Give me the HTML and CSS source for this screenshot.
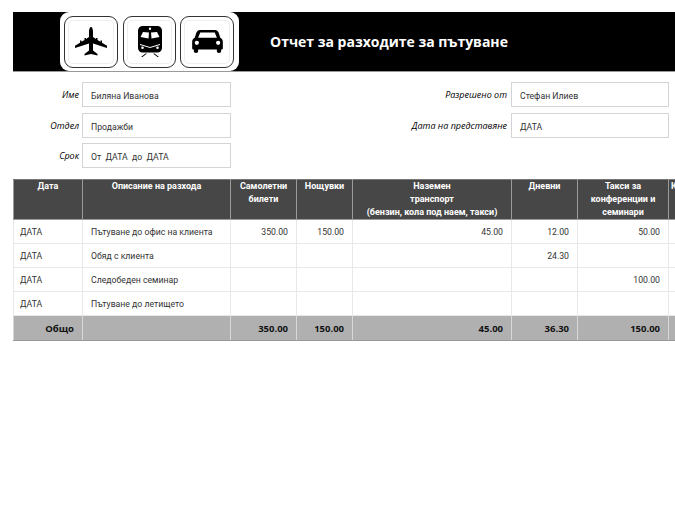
FILE: index.html
```html
<!DOCTYPE html>
<html lang="bg">
<head>
<meta charset="utf-8">
<title>Отчет за разходите за пътуване</title>
<link rel="stylesheet" href="styles.css">
</head>
<body>
<div class="page">
  <header class="banner">
    <div class="tab">
      <div class="icon"><svg viewBox="0 0 32 29" width="32" height="29"><path d="M16 0c1.200 0 2 2 2 5v5l3 2v-1h1.500v2l3 1.800V13.500H27v2.300l5 3V21l-14-4.500v7l4.500 3.500v1.500L16 27l-6.500 1.500V27l4.500-3.500v-7L0 21v-2.200l5-3v-2.300h1.500v1.300l3-1.800v-2H11v1l3-2V5c0-3 .8-5 2-5z"/></svg></div>
      <div class="icon icon-mid"><svg viewBox="0 0 24 31" width="24" height="31"><path fill-rule="evenodd" d="M5 0h14c3 0 5 2 5 4.500V22c0 2.500-2 4.500-4.500 4.500h-15C2 26.500 0 24.500 0 22V4.500C0 2 2 0 5 0zm7 1.500a1.200 1.200 0 1 0 0 2.400 1.200 1.200 0 0 0 0-2.400zM5 6 2.500 11l8 1.500L11 6.500zm14 0-6 .5.500 6 8-1.500zM2 18v1l10 3 10-3v-1l-10 3zm2.500 2.500a1.300 1.300 0 1 0 0 2.600 1.300 1.300 0 0 0 0-2.600zm15 0a1.300 1.300 0 1 0 0 2.600 1.300 1.300 0 0 0 0-2.600z"/><path d="M3 31l4.500-3.500H9L4.500 31zM21 31l-4.500-3.500H15l4.500 3.500z"/></svg></div>
      <div class="icon"><svg viewBox="2 8 36 27" width="31" height="23"><path fill-rule="evenodd" d="M11 8h18c2 0 3 1 4 3l2 6c2 1 3 2.500 3 5v7c0 1-.5 2-2 2v2c0 1.500-1 2-2.500 2S31 34.500 31 33v-2H9v2c0 1.500-1 2-2.500 2S4 34.500 4 33v-2c-1.500 0-2-1-2-2v-7c0-2.500 1-4 3-5l2-6c1-2 2-3 4-3zm.5 3-2.500 6h22l-2.500-6zM7.500 20.500a2.500 2.500 0 1 0 0 5 2.500 2.500 0 0 0 0-5zm25 0a2.500 2.500 0 1 0 0 5 2.500 2.500 0 0 0 0-5z"/></svg></div>
    </div>
    <h1 class="title">Отчет за разходите за пътуване</h1>
  </header>

  <section class="form">
    <div class="form-col">
      <div class="field"><span class="label">Име</span><span class="input">Биляна Иванова</span></div>
      <div class="field"><span class="label">Отдел</span><span class="input">Продажби</span></div>
      <div class="field"><span class="label">Срок</span><span class="input">От&nbsp; ДАТА&nbsp; до&nbsp; ДАТА</span></div>
    </div>
    <div class="form-col right">
      <div class="field"><span class="label">Разрешено от</span><span class="input">Стефан Илиев</span></div>
      <div class="field"><span class="label">Дата на представяне</span><span class="input">ДАТА</span></div>
    </div>
  </section>

  <table class="grid">
    <colgroup>
      <col class="c1"><col class="c2"><col class="c3"><col class="c4"><col class="c5"><col class="c6"><col class="c7"><col class="c8">
    </colgroup>
    <thead>
      <tr>
        <th>Дата</th><th>Описание на разхода</th><th>Самолетни<br>билети</th><th>Нощувки</th>
        <th>Наземен<br>транспорт<br>(бензин, кола под наем, такси)</th><th>Дневни</th>
        <th>Такси за<br>конференции и<br>семинари</th><th>Консултации</th>
      </tr>
    </thead>
    <tbody>
      <tr><td>ДАТА</td><td class="desc">Пътуване до офис на клиента</td><td class="n">350.00</td><td class="n">150.00</td><td class="n">45.00</td><td class="n">12.00</td><td class="n">50.00</td><td></td></tr>
      <tr><td>ДАТА</td><td class="desc">Обяд с клиента</td><td></td><td></td><td></td><td class="n">24.30</td><td></td><td></td></tr>
      <tr><td>ДАТА</td><td class="desc">Следобеден семинар</td><td></td><td></td><td></td><td></td><td class="n">100.00</td><td></td></tr>
      <tr><td>ДАТА</td><td class="desc">Пътуване до летището</td><td></td><td></td><td></td><td></td><td></td><td></td></tr>
    </tbody>
    <tfoot>
      <tr><td class="n">Общо</td><td></td><td class="n">350.00</td><td class="n">150.00</td><td class="n">45.00</td><td class="n">36.30</td><td class="n">150.00</td><td></td></tr>
    </tfoot>
  </table>
</div>
</body>
</html>
```

FILE: styles.css
```css
html, body { margin: 0; padding: 0; background: #fff; overflow: hidden; }
.page {
  width: 675px;
  height: 520px;
  overflow: hidden;
  padding: 12px 0 0 13px;
  box-sizing: border-box;
  font-family: Roboto, sans-serif;
  font-size: 8.7px;
  color: #333;
}
.banner {
  display: flex;
  align-items: center;
  width: 662px;
  height: 60px;
  box-sizing: border-box;
  background: #000;
  border-bottom: 1px solid #999;
  padding-left: 47px;
}
.tab {
  display: flex;
  gap: 4px;
  align-items: center;
  height: 59px;
  width: 179px;
  box-sizing: border-box;
  padding-left: 4px;
  background: #fff;
  border-radius: 9px;
}
.icon {
  width: 54px;
  height: 52px;
  box-sizing: border-box;
  display: flex;
  align-items: center;
  justify-content: center;
  background: #fff;
  border: 1px solid #333;
  border-radius: 9px;
  box-shadow: inset 0 0 0 3px #fff, inset 0 0 0 4px #eee;
}
.icon-mid { width: 53px; margin-left: 1px; }
.title {
  margin: 0 0 0 31px;
  font-family: "Open Sans", sans-serif;
  font-size: 14px;
  font-weight: 700;
  color: #fff;
}
.form {
  display: flex;
  padding-top: 10px;
  height: 107px;
  box-sizing: border-box;
}
.form-col { display: flex; flex-direction: column; gap: 5.5px; }
.form-col .label { width: 66px; }
.form-col.right .label { width: 276px; }
.field { display: flex; align-items: center; }
.label {
  text-align: right;
  font-family: "Open Sans", sans-serif;
  font-size: 9px;
  font-style: italic;
  color: #000;
  margin-right: 3px;
  white-space: nowrap;
}
.input {
  display: block;
  width: 149px;
  height: 25px;
  line-height: 25px;
  box-sizing: border-box;
  border: 1px solid #d4d4d4;
  padding: 1px 0 0 8px;
  color: #333;
}
.form-col.right .input { width: 158px; margin-left: 1px; }
.grid {
  border-collapse: collapse;
  table-layout: fixed;
  width: 715px;
}
.c1 { width: 69px; } .c2 { width: 148px; } .c3 { width: 66px; } .c4 { width: 56px; }
.c5 { width: 159px; } .c6 { width: 66px; } .c7 { width: 91px; } .c8 { width: 60px; }
.grid th {
  height: 40px;
  padding: 0 2px;
  box-sizing: border-box;
  background: #474747;
  color: #fff;
  font-size: 9px;
  font-weight: 700;
  line-height: 13px;
  vertical-align: top;
  text-align: center;
  overflow: hidden;
  border: 1px solid #9a9a9a;
  border-top-color: #777;
  white-space: nowrap;
}
.grid tbody td {
  height: 24px;
  padding: 1px 6px 0;
  box-sizing: border-box;
  border: 1px solid #e8e8e8;
  vertical-align: middle;
  white-space: nowrap;
  overflow: hidden;
}
.grid tbody td.desc { padding-left: 8px; }
.grid .n { text-align: right; padding-right: 8px; }
.grid tfoot td {
  height: 25px;
  padding: 0 8px;
  box-sizing: border-box;
  background: #b0b0b0;
  color: #111;
  font-family: "Open Sans", sans-serif;
  font-weight: 700;
  font-size: 9.5px;
  border: 1px solid #d8d8d8;
  border-top: 1px solid #999;
  border-bottom-color: #999;
}
```
